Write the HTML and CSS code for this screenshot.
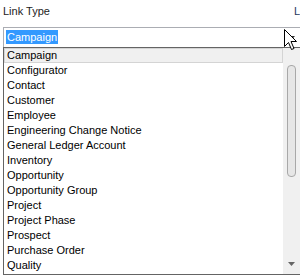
FILE: index.html
```html
<html>
<head>
  <meta charset="UTF-8">
  <title>Link Type</title>
  <link rel="stylesheet" href="styles.css">
</head>
<body>
  <div class="form">
    <div class="labels">
      <span class="label">Link Type</span>
      <span class="label next">L</span>
    </div>
    <div class="combo">
      <div class="input"><span class="sel">Campaign</span></div>
      <div class="dropbtn">
        <svg width="7" height="4" viewBox="0 0 7 4"><path d="M0 0h7L3.5 4z" fill="#333"/></svg>
      </div>
    </div>
    <div class="list">
      <ul class="items">
        <li class="current">Campaign</li>
        <li>Configurator</li>
        <li>Contact</li>
        <li>Customer</li>
        <li>Employee</li>
        <li>Engineering Change Notice</li>
        <li>General Ledger Account</li>
        <li>Inventory</li>
        <li>Opportunity</li>
        <li>Opportunity Group</li>
        <li>Project</li>
        <li>Project Phase</li>
        <li>Prospect</li>
        <li>Purchase Order</li>
        <li>Quality</li>
      </ul>
      <div class="scrollbar">
        <div class="thumb"></div>
        <div class="spacer"></div>
        <svg class="arrow" width="7" height="4" viewBox="0 0 7 4"><path d="M0 0h7L3.5 4z" fill="#666"/></svg>
      </div>
    </div>
    <!-- mouse pointer over the drop button -->
    <svg class="cursor" width="14" height="23" viewBox="0 0 14 23">
      <path d="M0.5 0.5V17.5L4.5 13.5L7.5 20.5L10 19.5L7 12.5H12.5Z" fill="#fff" stroke="#000" stroke-width="1"/>
    </svg>
  </div>
</body>
</html>
```

FILE: styles.css
```css
body{
  margin: 0;
  background-color: #fff;
  font-family: "Liberation Sans", Arial, sans-serif;
  font-size: 11px;
  color: #000;
}
.form{
  position: relative;
  width: 300px;
  height: 275px;
  overflow: hidden;
}
.labels{
  display: flex;
  justify-content: space-between;
  height: 27px;
  padding-left: 3px;
  line-height: 22px;
  color: #222;
}
.label.next{
  color: #1e395b;
}
.combo{
  display: flex;
  margin-left: 3px;
  height: 19px;
  border: 1px solid #abadb3;
  border-right: none;
  border-bottom: none;
}
.input{
  flex: 1;
  padding: 2px 0 0 2px;
}
.sel{
  display: inline-block;
  background-color: #3399ff;
  color: #fff;
  line-height: 14px;
  padding: 0 1px;
}
.dropbtn{
  width: 17px;
  display: flex;
  align-items: center;
  justify-content: center;
}
.list{
  display: flex;
  margin-left: 3px;
  height: 226px;
  border: 1px solid #646464;
  border-right: none;
}
.items{
  flex: 1;
  list-style: none;
  margin: 0;
  padding: 0;
}
.items li{
  height: 15px;
  line-height: 15px;
  padding-left: 3px;
}
.items li.current{
  background-color: #f0f0f0;
  border: 1px solid #d4d4d4;
  height: 13px;
  line-height: 13px;
  padding-left: 2px;
}
.scrollbar{
  width: 17px;
  background-color: #f0f0f0;
  display: flex;
  flex-direction: column;
  align-items: center;
  padding: 17px 0 8px;
  box-sizing: border-box;
}
.thumb{
  width: 7px;
  height: 110px;
  border: 1px solid #a8a8a8;
  border-radius: 4px;
  background-color: #e6e6e6;
}
.spacer{
  flex: 1;
}
.cursor{
  position: absolute;
  left: 284px;
  top: 29px;
}
```
